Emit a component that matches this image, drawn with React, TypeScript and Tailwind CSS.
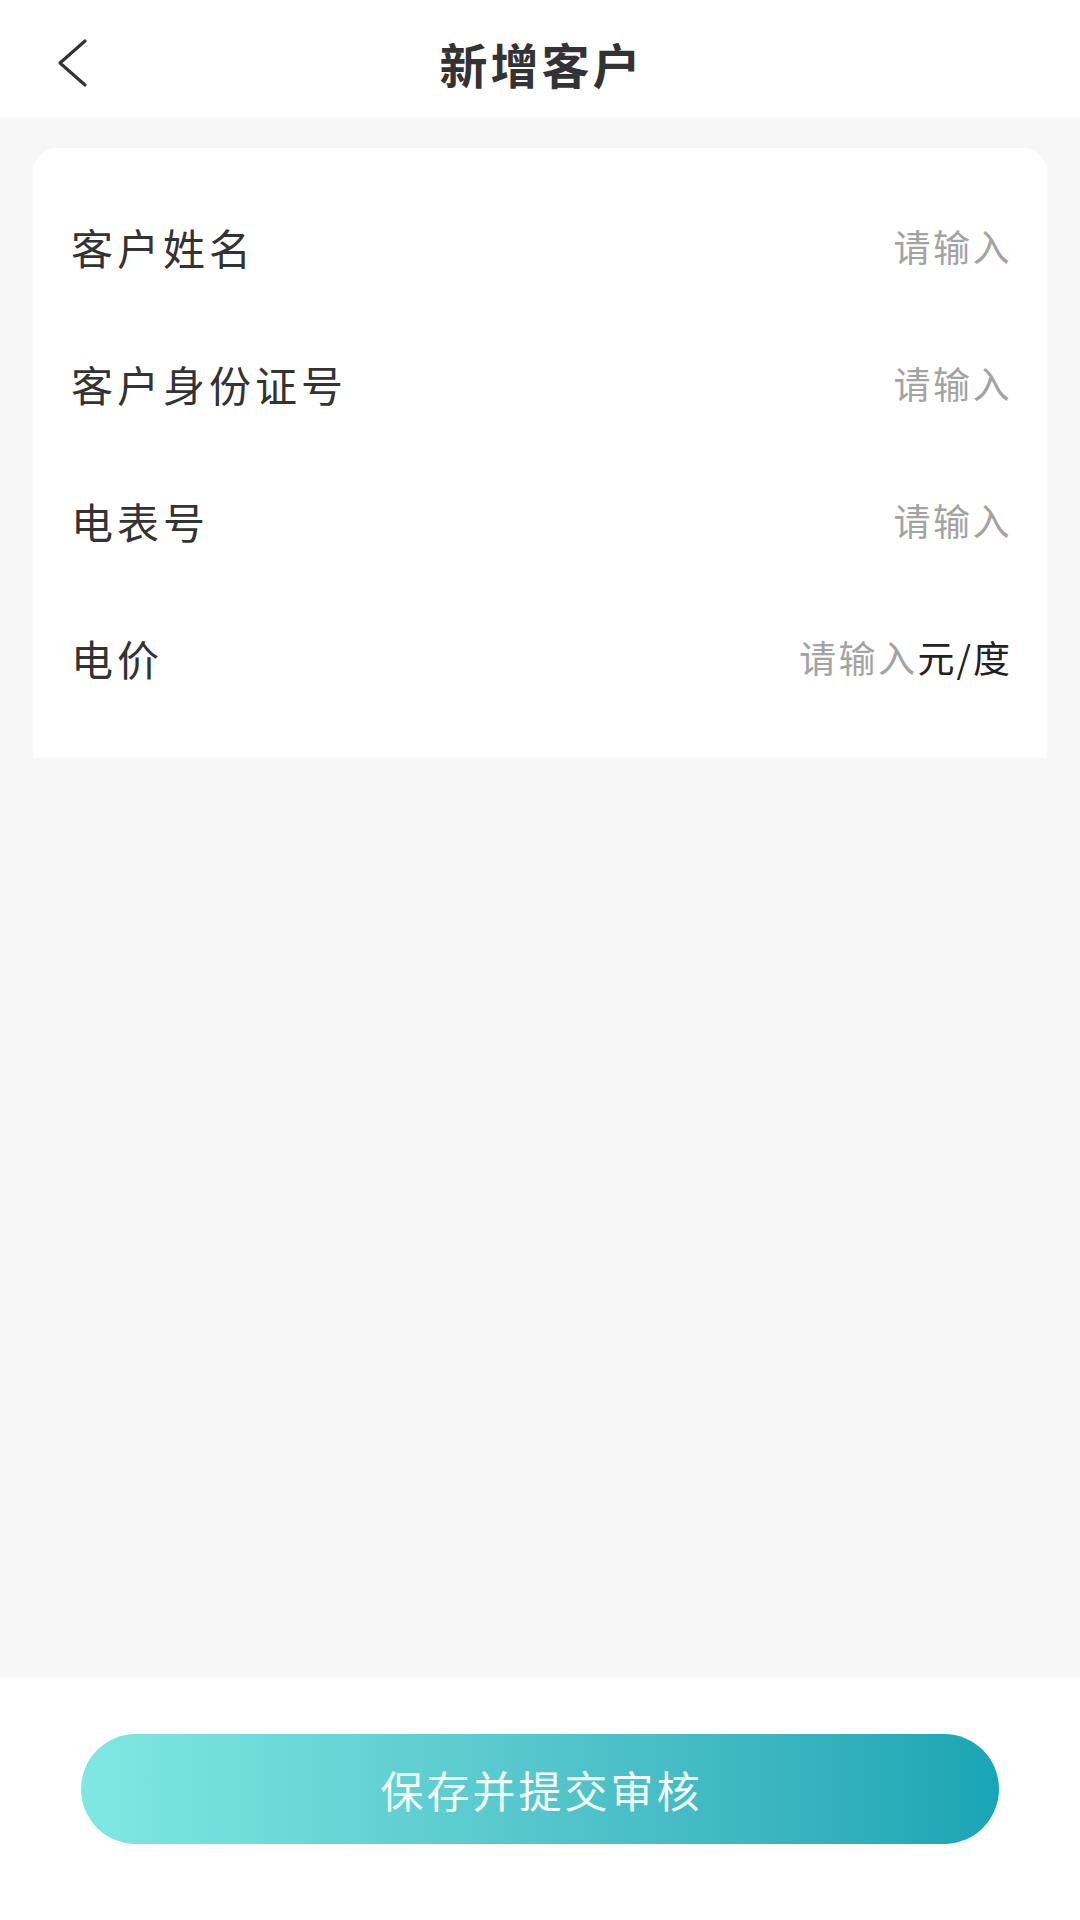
import React from "react";

const rows = [
  { label: "客户姓名" },
  { label: "客户身份证号" },
  { label: "电表号" },
  { label: "电价", unit: "元/度" },
];

export default function App() {
  return (
    <div
      className="flex h-[1920px] w-[1080px] flex-col bg-[#f7f7f7]"
      style={{ fontFamily: '"Noto Sans CJK SC", "Noto Sans", sans-serif' }}
    >
      <header className="relative flex h-[118px] shrink-0 items-center justify-center bg-white pt-[8px]">
        <button className="absolute left-[56px] top-[38px] flex h-[50px] w-[32px] items-center justify-center">
          <svg width="32" height="50" viewBox="0 0 32 50" fill="none">
            <polyline
              points="29,3 4,25 29,47"
              stroke="#333333"
              strokeWidth="3.2"
              strokeLinecap="round"
              strokeLinejoin="round"
            />
          </svg>
        </button>
        <h1 className="pl-[3px] text-[48px] font-bold leading-none tracking-[3px] text-[#333333]">
          新增客户
        </h1>
      </header>

      <main className="flex-1 px-[33px] pt-[30px]">
        <div className="rounded-t-[24px] bg-white pb-[32px] pt-[30px]">
          {rows.map((r) => (
            <div
              key={r.label}
              className="flex h-[137px] items-center justify-between pl-[38px] pr-[35px]"
            >
              <span className="text-[42px] leading-none tracking-[4px] text-[#333333]">
                {r.label}
              </span>
              <span className="flex items-center">
                <span className="text-[37px] leading-none tracking-[2.5px] text-[#a3a3a3]">
                  请输入
                </span>
                {r.unit && (
                  <span className="text-[37px] leading-none tracking-[2px] text-[#222222]">
                    {r.unit}
                  </span>
                )}
              </span>
            </div>
          ))}
        </div>
      </main>

      <footer className="h-[242px] shrink-0 bg-white px-[81px] pt-[56px]">
        <button className="flex h-[110px] w-full items-center justify-center rounded-full bg-gradient-to-r from-[#80e8e2] to-[#18a5b5]">
          <span className="pl-[3px] text-[43px] leading-none tracking-[3px] text-[#f4ffff]">
            保存并提交审核
          </span>
        </button>
      </footer>
    </div>
  );
}
